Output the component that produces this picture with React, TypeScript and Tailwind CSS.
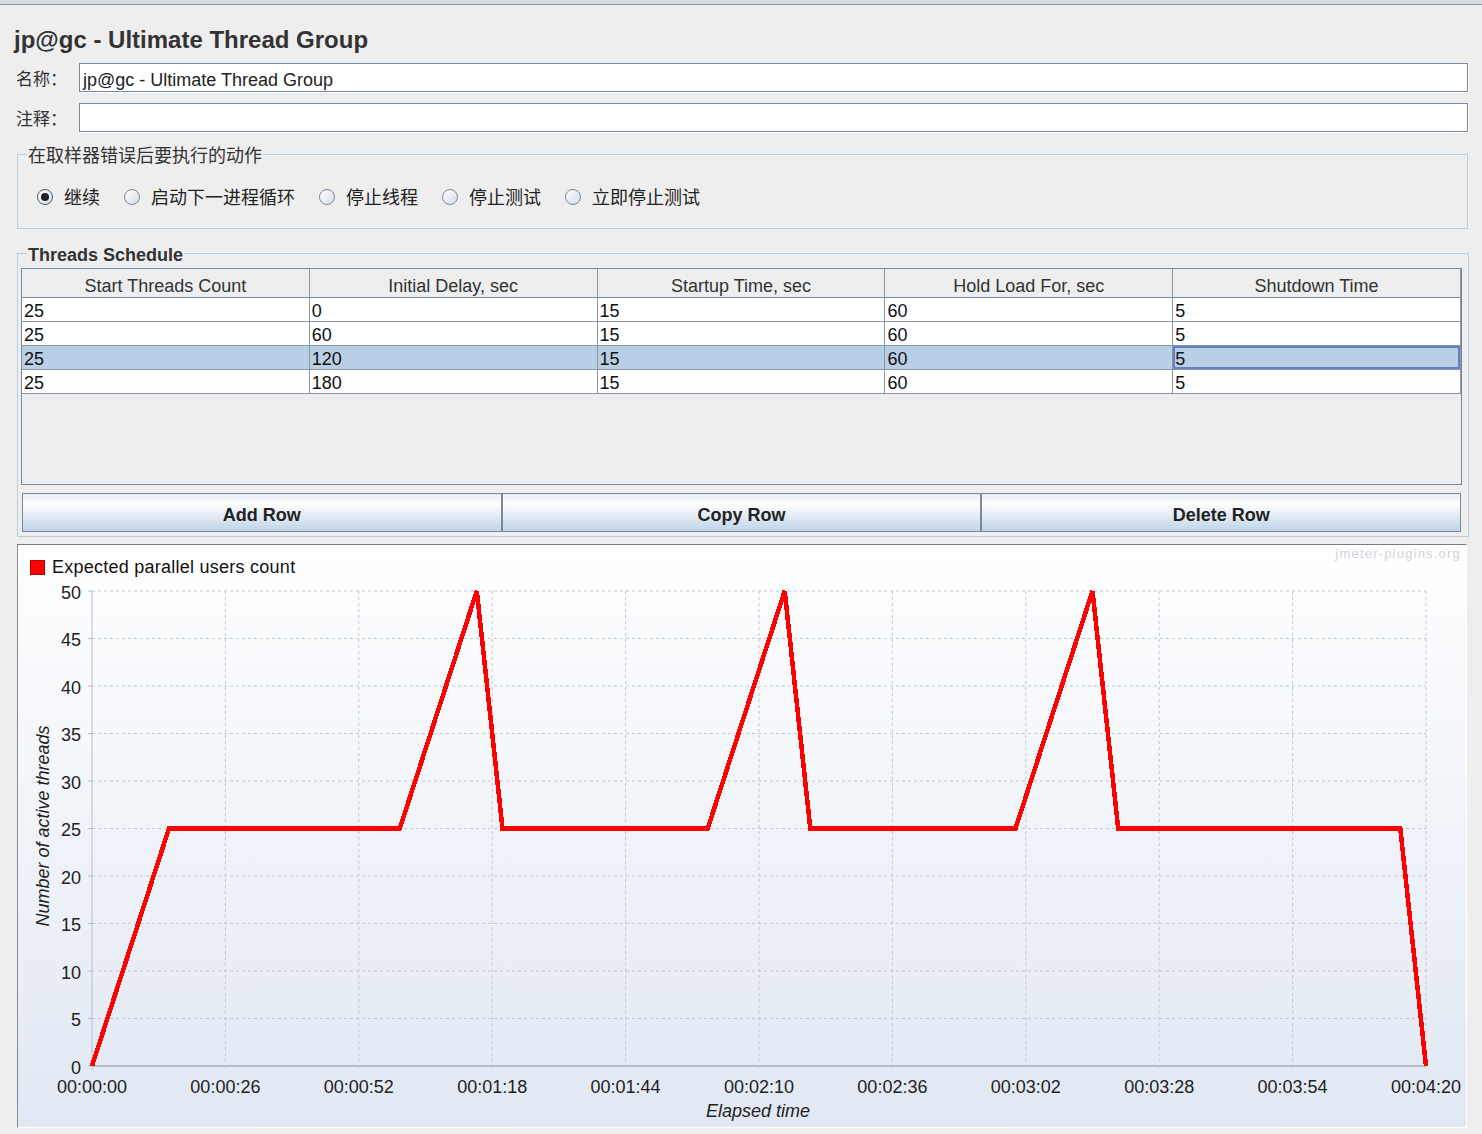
import React from "react";

const columns = [
  "Start Threads Count",
  "Initial Delay, sec",
  "Startup Time, sec",
  "Hold Load For, sec",
  "Shutdown Time",
];

const rows = [
  ["25", "0", "15", "60", "5"],
  ["25", "60", "15", "60", "5"],
  ["25", "120", "15", "60", "5"],
  ["25", "180", "15", "60", "5"],
];

const actions = ["继续", "启动下一进程循环", "停止线程", "停止测试", "立即停止测试"];

// chart geometry (svg coords)
const X0 = 74;
const X1 = 1408;
const Y0 = 491;
const Y50 = 16;
const tx = (t: number) => X0 + (t / 260) * (X1 - X0);
const vy = (v: number) => Y0 - (v / 50) * (Y0 - Y50);

const series: [number, number][] = [
  [0, 0], [15, 25], [60, 25], [75, 50], [80, 25], [120, 25], [135, 50],
  [140, 25], [180, 25], [195, 50], [200, 25], [255, 25], [260, 0],
];

const xLabels = [
  "00:00:00", "00:00:26", "00:00:52", "00:01:18", "00:01:44", "00:02:10",
  "00:02:36", "00:03:02", "00:03:28", "00:03:54", "00:04:20",
];

const Radio = ({ checked, label }: { checked?: boolean; label: string }) => (
  <div className="flex items-center gap-[11px]">
    <div
      className={
        "flex h-[16px] w-[16px] items-center justify-center rounded-full border bg-linear-to-br from-white to-[#d3dde9] " +
        (checked ? "border-[#4d5966]" : "border-[#7a8a99]")
      }
    >
      {checked && <div className="h-[8px] w-[8px] rounded-full bg-[#222]" />}
    </div>
    <span className="pt-[2px] text-[18px] leading-[24px] text-[#222]">{label}</span>
  </div>
);

const Field = ({ label, value }: { label: string; value: string }) => (
  <div className="flex h-[29px] items-center">
    <div className="w-[65px] pl-[2px] pt-[4px] text-[17px] leading-[20px] text-[#333]">{label}</div>
    <div className="flex h-[29px] flex-1 items-center border border-[#7a8a99] bg-white pl-[3px] pt-[4px] text-[18px] leading-[20px] text-[#222] shadow-[1px_1px_0_#ffffff]">
      {value}
    </div>
  </div>
);

const Chart = () => {
  const path = series.map(([t, v]) => `${tx(t).toFixed(1)},${vy(v).toFixed(1)}`).join(" ");
  return (
    <svg width={1447} height={551} className="block">
      {[5, 10, 15, 20, 25, 30, 35, 40, 45, 50].map((v) => (
        <line key={v} x1={X0} x2={X1} y1={vy(v)} y2={vy(v)} stroke="#c2c6ce" strokeDasharray="3 3" />
      ))}
      {xLabels.map((_, i) =>
        i === 0 ? null : (
          <line key={i} x1={tx(i * 26)} x2={tx(i * 26)} y1={Y50} y2={Y0 + 4} stroke="#c2c6ce" strokeDasharray="3 3" />
        ),
      )}
      <line x1={X0} x2={X0} y1={Y50} y2={Y0 + 4} stroke="#b8bec8" />
      <line x1={X0} x2={X1} y1={Y0} y2={Y0} stroke="#b8bec8" strokeWidth={2} />
      {[0, 5, 10, 15, 20, 25, 30, 35, 40, 45, 50].map((v) => (
        <g key={v}>
          <line x1={X0 - 4} x2={X0} y1={vy(v)} y2={vy(v)} stroke="#b8bec8" />
          <text x={63} y={vy(v) + 7.5} textAnchor="end" fontSize={18} fill="#222" fontFamily="'Liberation Sans', sans-serif">
            {v}
          </text>
        </g>
      ))}
      {xLabels.map((l, i) => (
        <text key={l} x={tx(i * 26)} y={518} textAnchor="middle" fontSize={18} fill="#222" fontFamily="'Liberation Sans', sans-serif">
          {l}
        </text>
      ))}
      <text x={740} y={542} textAnchor="middle" fontSize={18} fontStyle="italic" fill="#222" fontFamily="'Liberation Sans', sans-serif">
        Elapsed time
      </text>
      <text
        transform="translate(31,251) rotate(-90)"
        textAnchor="middle"
        fontSize={18}
        fontStyle="italic"
        fill="#222"
        fontFamily="'Liberation Sans', sans-serif"
      >
        Number of active threads
      </text>
      <polyline points={path} fill="none" stroke="#ff0000" strokeWidth={4.5} strokeLinejoin="miter" shapeRendering="crispEdges" />
    </svg>
  );
};

const App = () => {
  return (
    <div className="min-h-screen w-[1482px] bg-[#eeeeee] font-['Liberation_Sans','Noto_Sans_CJK_SC',sans-serif] text-[#222]">
      <div className="h-[5px] border-b border-[#8595a5] bg-[#dcdcdc]" />
      <div className="px-[14px]">
        <h1 className="mt-[21px] text-[24px] font-bold leading-[28px] text-[#333]">jp@gc - Ultimate Thread Group</h1>

        <div className="mt-[9px]">
          <Field label="名称：" value="jp@gc - Ultimate Thread Group" />
        </div>
        <div className="mt-[11px]">
          <Field label="注释：" value="" />
        </div>

        <fieldset className="ml-[3px] mt-[10px] border border-[#b8cfe5]">
          <legend className="ml-[9px] px-[1px] text-[18px] leading-[24px] text-[#333]">
            <span className="relative top-[2px]">在取样器错误后要执行的动作</span>
          </legend>
          <div className="flex items-center gap-[24px] pb-[18px] pl-[19px] pt-[18px]">
            {actions.map((a, i) => (
              <Radio key={a} label={a} checked={i === 0} />
            ))}
          </div>
        </fieldset>

        <fieldset className="ml-[3px] mt-[13px] border border-[#b8cfe5]">
          <legend className="ml-[9px] px-[1px] text-[18px] font-bold leading-[22px] text-[#333]">
            <span className="relative top-[2px]">Threads Schedule</span>
          </legend>
          <div className="pb-[4px] pl-[3px] pr-[6px] pt-[4px]">
            <div className="h-[217px] w-[1441px] border border-[#7a8a99] bg-[#eeeeee]">
              <div className="grid h-[29px] grid-cols-5 border-b border-[#7a8a99]">
                {columns.map((c) => (
                  <div key={c} className="flex items-center justify-center border-r border-[#8a96a5] pt-[4px] text-[18px] text-[#333]">
                    {c}
                  </div>
                ))}
              </div>
              {rows.map((r, ri) => (
                <div
                  key={ri}
                  className={"grid h-[24px] grid-cols-5 border-b border-[#8a96a5] " + (ri === 2 ? "bg-[#b8cfe5]" : "bg-white")}
                >
                  {r.map((v, ci) => (
                    <div
                      key={ci}
                      className={
                        "flex items-center border-r border-[#8a96a5] pl-[2px] pt-[3px] text-[18px] leading-none text-[#111] " +
                        (ri === 2 && ci === 4 ? "shadow-[inset_0_0_0_2px_#6382bf]" : "")
                      }
                    >
                      {v}
                    </div>
                  ))}
                </div>
              ))}
            </div>
            <div className="mt-[8px] grid w-[1440px] grid-cols-3 pl-[1px]">
              {["Add Row", "Copy Row", "Delete Row"].map((b) => (
                <button
                  key={b}
                  className="h-[39px] border border-[#7a8a99] bg-linear-to-b from-[#e4edf7] via-white via-25% to-[#c0d4e9] pt-[6px] text-[18px] font-bold text-[#222]"
                >
                  {b}
                </button>
              ))}
            </div>
          </div>
        </fieldset>

        <div className="ml-[3px] mr-[1px] mt-[7px] h-[584px] border-b border-l border-r border-t border-b-white border-l-[#8a8a8a] border-r-white border-t-[#7a7a7a] bg-linear-to-b from-white to-[#e1e8f3]">
          <div className="flex h-[30px] items-start justify-between">
            <div className="ml-[12px] mt-[12px] flex items-center gap-[7px]">
              <div className="h-[15px] w-[15px] border border-[#c00000] bg-[#ff0000]" />
              <span className="text-[18px] leading-[20px] tracking-[0.25px] text-[#111]">Expected parallel users count</span>
            </div>
            <span className="mr-[5px] mt-[1px] text-[13px] leading-[15px] tracking-[1.2px] text-[#d0d3da]">jmeter-plugins.org</span>
          </div>
          <Chart />
        </div>
      </div>
    </div>
  );
};

export default App;
